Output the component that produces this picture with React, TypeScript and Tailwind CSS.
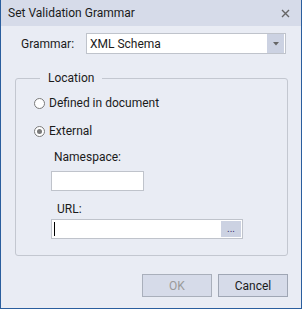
import React from 'react';

const font = { fontFamily: 'Roboto, "Liberation Sans", Arial, sans-serif' };

const Radio: React.FC<{ checked?: boolean; label: string }> = ({ checked, label }) => (
  <div className="flex items-center h-[14px]">
    <div className="w-[11px] h-[11px] rounded-full border border-[#7a7a7a] bg-white flex items-center justify-center">
      {checked && <div className="w-[5px] h-[5px] rounded-full bg-[#7a7a7a]" />}
    </div>
    <span className="ml-[4px]">{label}</span>
  </div>
);

const App: React.FC = () => {
  return (
    <div
      className="w-[302px] h-[309px] flex flex-col bg-[#e9ecf4] border border-t-0 border-[#2a5e9e] text-[12px] leading-[14px] text-[#1b1b1b]"
      style={font}
    >
      {/* Title bar */}
      <div className="h-[26px] bg-[#d6dbe9] flex items-center justify-between pl-[7px] pr-[11px]">
        <span>Set Validation Grammar</span>
        <svg width="9" height="9" viewBox="0 0 9 9">
          <path d="M1 1 L8 8 M8 1 L1 8" stroke="#666" strokeWidth="1.4" />
        </svg>
      </div>

      <div className="flex-1 flex flex-col pl-[14px] pr-[13px] pt-[7px]">
        {/* Grammar row */}
        <div className="flex items-center">
          <span className="pl-[6px] w-[71px]">Grammar:</span>
          <div className="w-[200px] h-[21px] border border-[#bfc3cb] bg-white flex items-center">
            <span className="flex-1 pl-[3px]">XML Schema</span>
            <div className="w-[17px] h-[19px] bg-[#ccd2e2] flex items-center justify-center mr-px">
              <svg width="6" height="4" viewBox="0 0 6 4">
                <path d="M0 0 H6 L3 3.5 Z" fill="#666" />
              </svg>
            </div>
          </div>
        </div>

        {/* Location group */}
        <fieldset className="mt-[17px] border border-[#c3c7d0] rounded-[3px] pl-[18px] pt-[11px] pb-[16px]">
          <legend className="ml-[6px] px-[8px]">Location</legend>
          <Radio label="Defined in document" />
          <div className="mt-[14px]">
            <Radio checked label="External" />
          </div>
          <div className="mt-[12px] pl-[20px]">Namespace:</div>
          <div className="mt-[7px] ml-[17px] w-[93px] h-[20px] border border-[#bfc3cb] bg-white" />
          <div className="mt-[11px] pl-[23px]">URL:</div>
          <div className="mt-[3px] ml-[17px] w-[192px] h-[20px] border border-[#bfc3cb] bg-white flex items-center">
            <div className="ml-[2px] w-px h-[14px] bg-black" />
            <div className="ml-auto mr-px w-[20px] h-[16px] bg-[#ccd2e2] flex items-center justify-center text-[10px] text-[#3a2a6a]">
              ...
            </div>
          </div>
        </fieldset>

        {/* Buttons */}
        <div className="mt-[18px] flex justify-end gap-[6px]">
          <button className="w-[70px] h-[23px] border border-[#a9afbb] bg-[#d6dbe9] text-[#9a9a9a]">
            OK
          </button>
          <button className="w-[70px] h-[23px] border border-[#9fa6b4] bg-[#d6dbe9] text-[#1b1b1b]">
            Cancel
          </button>
        </div>
      </div>
    </div>
  );
};

export default App;
